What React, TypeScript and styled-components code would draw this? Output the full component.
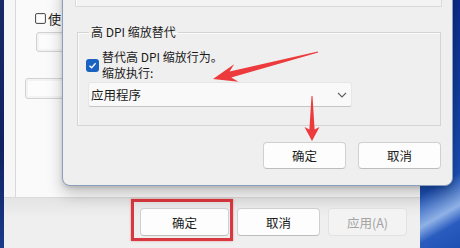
import React from 'react';
import styled, { createGlobalStyle } from 'styled-components';

const Global = createGlobalStyle`
  html, body { margin: 0; padding: 0; background: #0e2a80; }
  body {
    font-family: "Noto Sans CJK SC", "Microsoft YaHei", sans-serif;
    font-size: 12px;
    color: #1b1b1b;
  }
  * { box-sizing: border-box; }
`;

const Screen = styled.div`
  position: relative;
  width: 460px;
  height: 248px;
  overflow: hidden;
  display: flex;
`;

const LeftDesk = styled.div`
  width: 4px;
  background: linear-gradient(180deg, #162a66, #0f2260 60%, #1a3a8a);
`;

const RightDesk = styled.div`
  flex: 1;
  background: linear-gradient(150deg, #0a2a86 0%, #123f9e 45%, #1b4fb3 72%, #8fb1e6 84%, #2a5cc0 90%, #1d4fb2 100%);
`;

const BackWindow = styled.div`
  width: 416px;
  display: flex;
  flex-direction: column;
  background: #ececec;
`;

const BackTop = styled.div`
  height: 198px;
  display: flex;
  padding-left: 11px;
  background: #f6f6f6;
  border-bottom: 1px solid #dadada;
`;

const BackPanel = styled.div`
  flex: 1;
  background: #fafafa;
  border-left: 1px solid #d9d9d9;
  padding: 11px 0 0 19px;
  display: flex;
  flex-direction: column;
`;

const BackCheckRow = styled.div`
  display: flex;
  align-items: center;
  gap: 2px;
  height: 14px;
  font-size: 13px;
`;

const BackCheck = styled.span`
  width: 11px;
  height: 11px;
  border: 1px solid #555;
  border-radius: 2px;
  background: #fff;
  box-shadow: inset 0 0 0 1px #e8e8e8;
`;

const GhostButton = styled.div<{ $left: number; $top: number; $w: number; $h: number }>`
  margin-left: ${p => p.$left}px;
  margin-top: ${p => p.$top}px;
  width: ${p => p.$w}px;
  height: ${p => p.$h}px;
  background: #fcfcfc;
  border: 1px solid #d2d2d2;
  border-radius: 3px;
  box-shadow: inset 0 0 0 2px #f3f3f3;
`;

const BackBar = styled.div`
  flex: 1;
  display: flex;
  gap: 8px;
  padding: 10px 0 0 136px;
  background: linear-gradient(180deg, #e4e4e4, #efefef 40%);
`;

const WinButton = styled.div<{ $w: number; $h: number; $disabled?: boolean }>`
  width: ${p => p.$w}px;
  height: ${p => p.$h}px;
  display: flex;
  align-items: center;
  justify-content: center;
  font-size: 12.5px;
  color: ${p => (p.$disabled ? '#a3a3a3' : '#1b1b1b')};
  background: ${p => (p.$disabled ? '#f3f3f3' : '#fdfdfd')};
  border: 1px solid ${p => (p.$disabled ? '#e2e2e2' : '#d0d0d0')};
  border-bottom-color: ${p => (p.$disabled ? '#e2e2e2' : '#bdbdbd')};
  border-radius: 4px;
`;

const Highlight = styled.div`
  position: absolute;
  left: 131px;
  top: 199px;
  width: 102px;
  height: 42px;
  border: 3px solid #d8383f;
  box-shadow: 0 0 2px rgba(216, 56, 63, 0.5);
  pointer-events: none;
`;

const Dialog = styled.div`
  position: absolute;
  left: 62px;
  top: -20px;
  width: 391px;
  display: flex;
  flex-direction: column;
  background: #efefef;
  border: 1px solid #8a9fbd;
  border-radius: 8px;
  box-shadow: 0 8px 16px rgba(0, 0, 0, 0.22), 0 2px 4px rgba(0, 0, 0, 0.12);
`;

const PrevGroup = styled.div`
  height: 26px;
  margin: 0 10px 0 12px;
  background: #f3f3f3;
  border: 1px solid #dadada;
  border-top: none;
  box-shadow: inset 1px 0 0 #fff;
`;

const Group = styled.fieldset`
  margin: 18px 11px 0 14px;
  padding: 10px 8px 0 8px;
  height: 101px;
  border: 1px solid #d4d4d4;
  box-shadow: inset 1px 1px 0 #fafafa;
  min-width: 0;
`;

const Legend = styled.legend`
  padding: 0 2px;
  margin-left: 3px;
  line-height: 14px;
  font-size: 12px;
`;

const CheckRow = styled.div`
  display: flex;
  align-items: center;
  gap: 3px;
`;

const Check = styled.span`
  width: 13px;
  height: 13px;
  border-radius: 3px;
  background: #1a62c0;
  display: flex;
  align-items: center;
  justify-content: center;
  flex: none;
`;

const Lines = styled.div`
  display: flex;
  flex-direction: column;
  line-height: 16px;
`;

const Combo = styled.div`
  margin: 1px 0 0 2px;
  width: 264px;
  height: 25px;
  display: flex;
  align-items: center;
  justify-content: space-between;
  padding: 0 4px 0 2px;
  background: #f9f9f9;
  border: 1px solid #e6e6e6;
  border-bottom: 1px solid #c4c4c4;
  border-radius: 3px;
  font-size: 12.5px;
`;

const ButtonRow = styled.div`
  display: flex;
  justify-content: flex-end;
  gap: 12px;
  margin-top: 16px;
  padding: 0 11px 16px 0;
`;

const Overlay = styled.svg`
  position: absolute;
  left: 0;
  top: 0;
  pointer-events: none;
`;

export default function App() {
  return (
    <>
      <Global />
      <Screen>
        <LeftDesk />
        <BackWindow>
          <BackTop>
            <BackPanel>
              <BackCheckRow>
                <BackCheck />
                <span>使</span>
              </BackCheckRow>
              <GhostButton $left={1} $top={7} $w={60} $h={20} />
              <GhostButton $left={-10} $top={26} $w={60} $h={21} />
            </BackPanel>
          </BackTop>
          <BackBar>
            <WinButton $w={89} $h={28}>确定</WinButton>
            <WinButton $w={83} $h={28}>取消</WinButton>
            <WinButton $w={79} $h={28} $disabled>应用(A)</WinButton>
          </BackBar>
        </BackWindow>
        <RightDesk />

        <Highlight />

        <Dialog>
          <PrevGroup />
          <Group>
            <Legend>高 DPI 缩放替代</Legend>
            <CheckRow>
              <Check>
                <svg width="9" height="9" viewBox="0 0 9 9">
                  <polyline points="1.5,4.8 3.6,6.8 7.6,2.2" fill="none" stroke="#fff" strokeWidth="1.3" />
                </svg>
              </Check>
              <Lines>
                <span>替代高 DPI 缩放行为。</span>
                <span>缩放执行:</span>
              </Lines>
            </CheckRow>
            <Combo>
              <span>应用程序</span>
              <svg width="10" height="6" viewBox="0 0 10 6">
                <polyline points="1,1 5,5 9,1" fill="none" stroke="#606060" strokeWidth="1.1" />
              </svg>
            </Combo>
          </Group>
          <ButtonRow>
            <WinButton $w={83} $h={27}>确定</WinButton>
            <WinButton $w={83} $h={27}>取消</WinButton>
          </ButtonRow>
        </Dialog>

        <Overlay width="460" height="248" viewBox="0 0 460 248">
          <polygon
            points="213,79 238.5,81.7 231.2,77.6 318.2,52.6 317.8,51.4 229.6,71.4 234.1,64.3"
            fill="#ec3a3d"
          />
          <polygon
            points="312,141 319.5,127 314.6,129.5 312.5,96 311.5,96 309.4,129.5 304.5,127"
            fill="#ec3a3d"
          />
        </Overlay>
      </Screen>
    </>
  );
}
